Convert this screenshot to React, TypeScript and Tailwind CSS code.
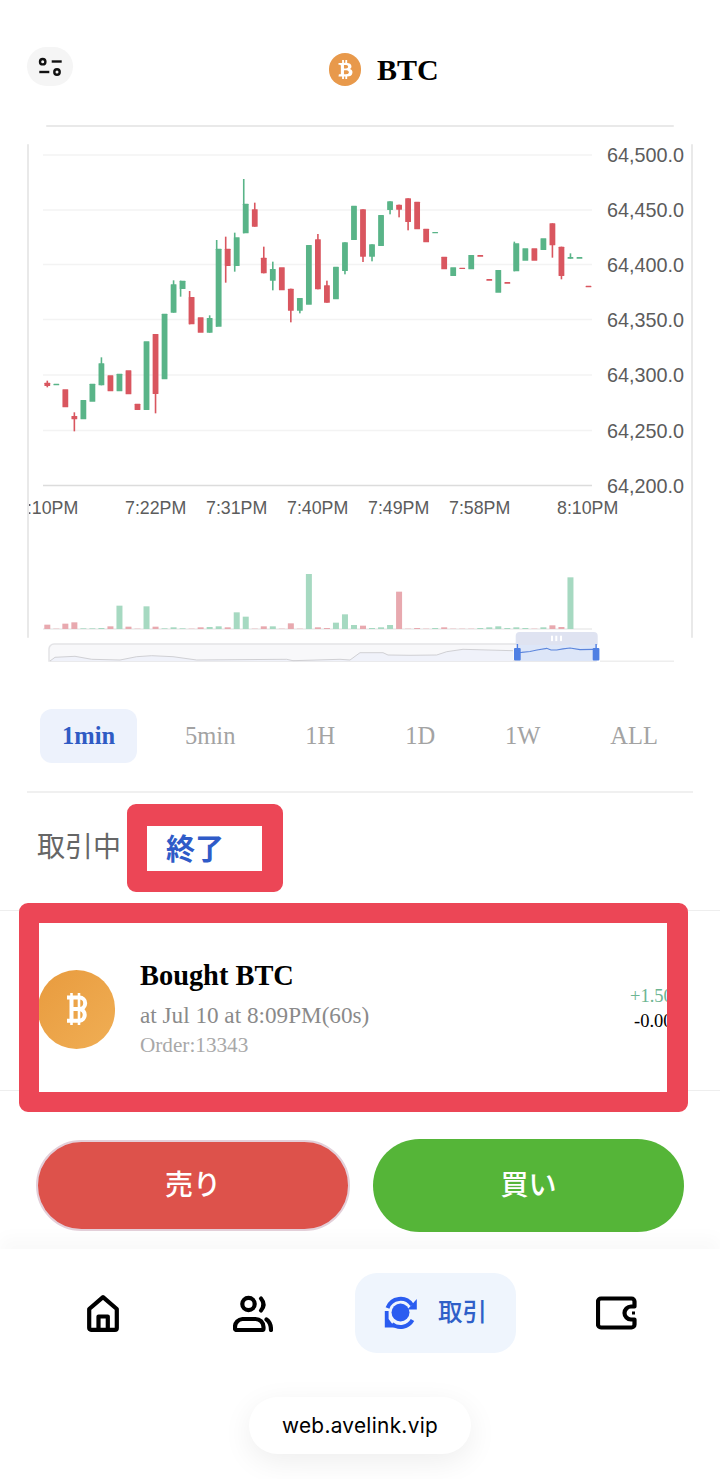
import { FaBtc } from "react-icons/fa";

const UP = "#59b488";
const DOWN = "#d9565f";

// side, body top, body bottom, wick top, wick bottom, wick offset. Values are thirds of a pixel below y=160.
type Candle = [1 | 0, number, number, number?, number?, number?];

const candles: Candle[] = [
  [0, 668, 678, 662, 682], [1, 671, 676], [0, 688, 742], [0, 768, 778, 757, 814], [1, 720, 778],
  [1, 671, 725], [1, 610, 676, 592], [0, 646, 694], [1, 641, 694], [0, 631, 703],
  [0, 731, 750], [1, 544, 750], [0, 522, 702, 522, 760], [1, 461, 658], [1, 373, 458, 361],
  [1, 362, 387, 362, 410, -2], [0, 411, 493, 393, 493, -2], [0, 472, 518], [1, 474, 518, 466], [1, 266, 500, 240, 500, -2],
  [0, 266, 318, 230, 368, -2], [1, 232, 318, 218, 335, -2], [1, 131, 220, 57, 220, -2], [0, 148, 200, 128], [0, 293, 340, 260],
  [1, 327, 362, 305, 391], [0, 322, 391], [0, 386, 452, 386, 487], [1, 414, 452, 414, 460], [1, 255, 434],
  [0, 238, 388, 222], [0, 376, 428, 362], [1, 320, 418], [1, 247, 333, 247, 343], [1, 137, 240],
  [0, 148, 290, 148, 306], [1, 253, 290, 253, 304], [1, 165, 258], [1, 124, 150, 124, 163], [0, 134, 149, 134, 172],
  [0, 115, 186, 115, 211], [0, 125, 208], [0, 206, 247], [1, 216, 220], [0, 290, 328],
  [1, 322, 348], [0, 323, 327], [1, 285, 328], [0, 285, 290], [0, 357, 362],
  [1, 330, 398], [0, 366, 371], [1, 250, 334, 245, 334, -2], [1, 265, 302], [0, 265, 302],
  [1, 235, 270], [0, 190, 256, 190, 293], [0, 260, 348, 260, 358], [1, 291, 296, 280], [1, 291, 296],
  [0, 377, 382],
];

// side, bar height in thirds of a pixel
const volumes: [1 | 0, number][] = [
  [0, 13], [0, 1], [0, 16], [0, 20], [1, 2], [1, 2], [1, 3], [0, 8], [1, 70], [0, 7],
  [0, 1], [1, 68], [0, 7], [1, 2], [1, 5], [1, 2], [0, 1], [0, 5], [1, 6], [1, 8],
  [0, 5], [1, 50], [1, 37], [0, 1], [0, 8], [1, 8], [0, 1], [0, 17], [0, 1], [1, 165],
  [0, 5], [0, 3], [1, 19], [1, 44], [1, 12], [0, 10], [1, 3], [1, 5], [1, 12], [0, 112],
  [0, 1], [0, 3], [0, 1], [1, 3], [0, 5], [0, 1], [0, 1], [0, 1], [1, 3], [1, 5],
  [1, 8], [1, 3], [1, 5], [1, 3], [0, 1], [1, 5], [0, 11], [0, 6], [1, 155],
];

const priceRows = [
  { label: "64,500.0", y: 155 },
  { label: "64,450.0", y: 210 },
  { label: "64,400.0", y: 264.5 },
  { label: "64,350.0", y: 319.5 },
  { label: "64,300.0", y: 375 },
  { label: "64,250.0", y: 430.5 },
  { label: "64,200.0", y: 485.5 },
];

const timeLabels = [
  { label: "7:10PM", x: 17 },
  { label: "7:22PM", x: 125 },
  { label: "7:31PM", x: 206 },
  { label: "7:40PM", x: 287 },
  { label: "7:49PM", x: 368 },
  { label: "7:58PM", x: 449 },
  { label: "8:10PM", x: 557 },
];

const ranges = ["1min", "5min", "1H", "1D", "1W", "ALL"];

const candleX = (i: number) => 47.3 + i * 9.02;
const candleY = (v: number) => 160 + v / 3;

function PriceChart() {
  return (
    <svg viewBox="0 120 720 545" className="block w-[720px] h-[545px]">
      <defs>
        <clipPath id="plot-clip">
          <rect x="29" y="120" width="662" height="545" />
        </clipPath>
      </defs>

      {/* card outline */}
      <rect x="46" y="125" width="628" height="2" rx="1" fill="#e9e9e9" />
      <rect x="27" y="144" width="2" height="494" rx="1" fill="#e9e9e9" />
      <rect x="691" y="144" width="2" height="494" rx="1" fill="#e9e9e9" />
      <rect x="600" y="660.5" width="74" height="1.5" fill="#eeeeee" />

      {priceRows.map((row, i) => (
        <g key={row.label}>
          <rect x="43" y={row.y - 0.75} width="549" height="1.5" fill={i === 6 ? "#dcdcdc" : "#f3f3f3"} />
          <text
            x="684"
            y={row.y + 7}
            textAnchor="end"
            className="fill-[#5c5c5c] text-[19.8px] font-['Liberation_Sans',sans-serif]"
          >
            {row.label}
          </text>
        </g>
      ))}

      <g clipPath="url(#plot-clip)">
        {timeLabels.map((t) => (
          <text key={t.label} x={t.x} y="514" className="fill-[#5c5c5c] text-[17.8px] font-['Liberation_Sans',sans-serif]">
            {t.label}
          </text>
        ))}
      </g>

      {candles.map(([up, top, bottom, wickTop, wickBottom, wickDx], i) => {
        const fill = up ? UP : DOWN;
        const x = candleX(i);
        return (
          <g key={i} fill={fill}>
            {wickTop !== undefined && (
              <rect
                x={x - 0.8 + (wickDx ?? 0)}
                y={candleY(wickTop)}
                width="1.6"
                height={candleY(wickBottom ?? bottom) - candleY(wickTop)}
              />
            )}
            <rect x={x - 2.9} y={candleY(top)} width="5.8" height={candleY(bottom) - candleY(top)} rx="0.5" />
          </g>
        );
      })}

      {/* volume */}
      <rect x="43" y="628.5" width="549" height="1" fill="#e2e2e2" />
      {volumes.map(([up, h], i) => (
        <rect
          key={i}
          x={candleX(i) - 3}
          y={629 - h / 3}
          width="6"
          height={h / 3}
          fill={up ? "#a6d9c1" : "#e8a9af"}
        />
      ))}

      {/* range slider */}
      <path d="M54 644 H596 V661 H49 V649 A5 5 0 0 1 54 644 Z" fill="#f8f8fa" stroke="#e3e3e6" strokeWidth="1.5" />
      <path
        d="M50 661 L55 657.3 L75 656.3 L91.7 659.3 L120 660 L136.7 656.7 L151.7 655.7 L173 656.7 L196.7 660 L286.7 659.3 L293 660.7 L340 659.3 L350 660 L360 652.7 L383 652.7 L388 655 L410 655.3 L436.7 655 L446.7 651.7 L463 649.3 L513 650.7 V661 Z"
        fill="#f0f2fa"
      />
      <path
        d="M50 661 L55 657.3 L75 656.3 L91.7 659.3 L120 660 L136.7 656.7 L151.7 655.7 L173 656.7 L196.7 660 L286.7 659.3 L293 660.7 L340 659.3 L350 660 L360 652.7 L383 652.7 L388 655 L410 655.3 L436.7 655 L446.7 651.7 L463 649.3 L513 650.7"
        fill="none"
        stroke="#d0d0d4"
        strokeWidth="1"
      />
      <rect x="517" y="645" width="79" height="16" fill="#dde6f8" />
      <path
        d="M517 652.5 L521.7 652.3 L530 651.5 L537 650 L546.7 648.3 L551 650 L556.7 650 L563 648.8 L570 648 L580 649.6 L593 649.3"
        fill="none"
        stroke="#5d86dc"
        strokeWidth="1.2"
      />
      <path d="M515.7 645 V636 A4 4 0 0 1 519.7 632 H593.7 A4 4 0 0 1 597.7 636 V645 Z" fill="#dfe3f1" />
      <rect x="551" y="635.7" width="2" height="5.4" fill="#ffffff" />
      <rect x="555.3" y="635.7" width="2" height="5.4" fill="#ffffff" />
      <rect x="560" y="635.7" width="2" height="5.4" fill="#ffffff" />
      <rect x="516.7" y="644" width="1.4" height="5" fill="#4f7fe3" />
      <rect x="595.4" y="644" width="1.4" height="5" fill="#4f7fe3" />
      <rect x="514" y="648" width="6.7" height="12.6" rx="1" fill="#4f7fe3" />
      <rect x="592.7" y="648" width="6.7" height="12.6" rx="1" fill="#4f7fe3" />
    </svg>
  );
}

// upright bitcoin mark used on the order row
function CoinMark() {
  return (
    <svg viewBox="0 0 24 34" className="w-[24px] h-[34px]" fill="none" stroke="#fff">
      <path d="M6.5 1 V33 M14 1 V33" strokeWidth="2.6" />
      <path d="M2 5.5 H14.5 A5.7 5.7 0 0 1 14.5 16.9 H6 M14.5 16.9 A6 6 0 0 1 14.5 28.8 H2 M6.5 5.5 V28.8" strokeWidth="4" />
    </svg>
  );
}

function HomeIcon() {
  return (
    <svg viewBox="0 0 32 37" className="w-[32px] h-[37px]" fill="none" stroke="#000" strokeWidth="4.2" strokeLinejoin="round" strokeLinecap="round">
      <path d="M2.2 14 L16 2.2 L29.8 14 V33 A1.8 1.8 0 0 1 28 34.8 H4 A1.8 1.8 0 0 1 2.2 33 Z" />
      <path d="M11.5 34 V21.5 H20.8 V34" />
    </svg>
  );
}

function UsersIcon() {
  return (
    <svg viewBox="0 0 40 37" className="w-[40px] h-[37px]" fill="none" stroke="#000" strokeWidth="4.2" strokeLinecap="round" strokeLinejoin="round">
      <circle cx="15.5" cy="9" r="6.2" />
      <path d="M28 3.5 Q33 9.5 28 15.5" />
      <path d="M9.5 24 H22.5 A8 8 0 0 1 30.5 32 V33.5 A1.5 1.5 0 0 1 29 35 H3.5 A1.5 1.5 0 0 1 2 33.5 V32 A8 8 0 0 1 9.5 24 Z" />
      <path d="M33.5 24.5 Q38 27.5 38 35" />
    </svg>
  );
}

function TradeIcon() {
  return (
    <svg viewBox="0 0 34 34" className="w-[34px] h-[34px]" fill="#2a5cf0">
      <circle cx="16.5" cy="16.5" r="9" />
      <path d="M3.5 12 A13.8 13.8 0 0 1 28 9" fill="none" stroke="#2a5cf0" strokeWidth="4" />
      <path d="M32.8 3 V13.5 H23.5 Z" />
      <path d="M28.5 24 A13.8 13.8 0 0 1 8 28" fill="none" stroke="#2a5cf0" strokeWidth="4" />
      <path d="M0.8 15 H4.6 V23 L11 31.5 H0.8 Z" />
    </svg>
  );
}

function WalletIcon() {
  return (
    <svg viewBox="0 0 41 34" className="w-[41px] h-[34px]" fill="none" stroke="#000" strokeWidth="4.2" strokeLinejoin="round">
      <path d="M5 2.5 H35.5 A3 3 0 0 1 38.5 5.5 V10.5 H35 A6.5 6.5 0 0 0 35 23.5 H38.5 V28.5 A3 3 0 0 1 35.5 31.5 H5 A3 3 0 0 1 2 28.5 V5.5 A3 3 0 0 1 5 2.5 Z" />
      <path d="M36 17 H39" strokeWidth="3" />
    </svg>
  );
}

export default function App() {
  return (
    <div className="w-[720px] h-[1479px] overflow-hidden bg-white font-['Liberation_Serif','Noto_Sans_CJK_JP',serif]">
      {/* header */}
      <div className="flex items-start h-[120px] pt-[47px] pl-[27px]">
        <button className="flex items-center justify-center w-[46px] h-[39px] rounded-full bg-[#f5f5f5]">
          <svg viewBox="0 0 26 20" className="w-[26px] h-[20px]" fill="none" stroke="#111" strokeWidth="2.4">
            <circle cx="5.7" cy="4.7" r="2.7" />
            <path d="M14.7 4.5 H24.7" />
            <path d="M2.3 15 H12.3" />
            <circle cx="20" cy="15" r="2.7" />
          </svg>
        </button>
        <div className="flex items-center ml-[256px] mt-[6px] h-[33px]">
          <span className="flex items-center justify-center w-[32px] h-[33px] rounded-full bg-[#e8994b] text-white">
            <FaBtc className="w-[19px] h-[19px]" />
          </span>
          <span className="ml-[16px] text-[30px] font-bold text-black leading-none">BTC</span>
        </div>
      </div>

      <PriceChart />

      {/* time ranges */}
      <div className="flex justify-between mt-[44px] pl-[40px] pr-[40px]">
        {ranges.map((r, i) => (
          <button
            key={r}
            className={`h-[54px] px-[22px] rounded-[12px] text-[24.5px] ${
              i === 0 ? "bg-[#edf2fc] text-[#2f5bc4] font-bold" : "text-[#a3a3a3]"
            }`}
          >
            {r}
          </button>
        ))}
      </div>
      <div className="mt-[28px] ml-[27px] w-[666px] h-[2px] bg-[#f0f0f0]" />

      {/* order tabs */}
      <div className="flex items-center mt-[11px] pl-[37px]">
        <span className="mb-[6px] w-[84px] text-[28px] leading-none text-[#666666] font-['Noto_Sans_CJK_JP',sans-serif]">取引中</span>
        <div className="ml-[6px] flex items-center w-[156px] h-[88px] pl-[19px] border-l-[20px] border-r-[21px] border-t-[22px] border-b-[21px] border-[#ec4656] rounded-[9px] bg-white">
          <span className="mb-[2px] text-[29px] leading-none font-bold text-[#2f5bc8] font-['Noto_Sans_CJK_JP',sans-serif]">終了</span>
        </div>
      </div>

      {/* order row */}
      <div className="mt-[18px] h-[181px] border-y border-[#eeeeee]">
        <div className="-mt-[8px] ml-[19px] w-[669px] h-[209px] border-l-[20px] border-r-[21px] border-y-[20px] border-[#ec4656] rounded-[9px] bg-white">
          <div className="flex items-center h-full overflow-hidden">
            <div className="flex items-center justify-center shrink-0 -ml-[1px] mt-[3px] w-[77px] h-[79px] rounded-full bg-linear-to-br from-[#e89b3e] to-[#f0ae54]">
              <CoinMark />
            </div>
            <div className="ml-[25px] mt-[1px] flex flex-col">
              <span className="text-[28.4px] leading-[34px] font-bold text-black">Bought BTC</span>
              <span className="mt-[8px] text-[23.2px] leading-[28px] text-[#8a8a8a]">at Jul 10 at 8:09PM(60s)</span>
              <span className="mt-[4px] text-[21.2px] leading-[24px] text-[#a8a8a8]">Order:13343</span>
            </div>
            <div className="ml-auto mt-[3px] flex flex-col w-[37px] shrink-0 overflow-hidden text-[18.5px] leading-[25px]">
              <span className="text-[#6db592] whitespace-nowrap">+1.50</span>
              <span className="ml-[4px] text-black whitespace-nowrap">-0.00</span>
            </div>
          </div>
        </div>
      </div>

      {/* buy / sell */}
      <div className="flex items-center mt-[48px] pl-[36px]">
        <button className="w-[314px] h-[91px] rounded-full border-2 border-[#e3cfd9] bg-[#dd524b] text-white text-[28px] font-medium">売り</button>
        <button className="ml-[23px] w-[311px] h-[93px] rounded-full bg-[#55b538] text-white text-[28px] font-medium">買い</button>
      </div>

      {/* bottom nav */}
      <div className="mt-[17px] h-[230px] bg-white pt-[24px] shadow-[0_-12px_16px_rgba(0,0,0,0.025)]">
        <div className="flex items-center h-[80px] pl-[87px]">
          <HomeIcon />
          <div className="ml-[114px]">
            <UsersIcon />
          </div>
          <div className="ml-[82px] flex items-center w-[161px] h-[80px] pl-[29px] rounded-[22px] bg-[#eff5fd]">
            <TradeIcon />
            <span className="ml-[20px] text-[24.5px] leading-none font-medium text-[#2f5fc8]">取引</span>
          </div>
          <div className="ml-[80px]">
            <WalletIcon />
          </div>
        </div>
        <div className="mx-auto mt-[44px] flex items-center justify-center w-[222px] h-[57px] rounded-full bg-white shadow-[0_8px_30px_rgba(0,0,0,0.07)]">
          <span className="text-[20.8px] tracking-[0.3px] text-black font-['Inter',sans-serif]">web.avelink.vip</span>
        </div>
      </div>
    </div>
  );
}
